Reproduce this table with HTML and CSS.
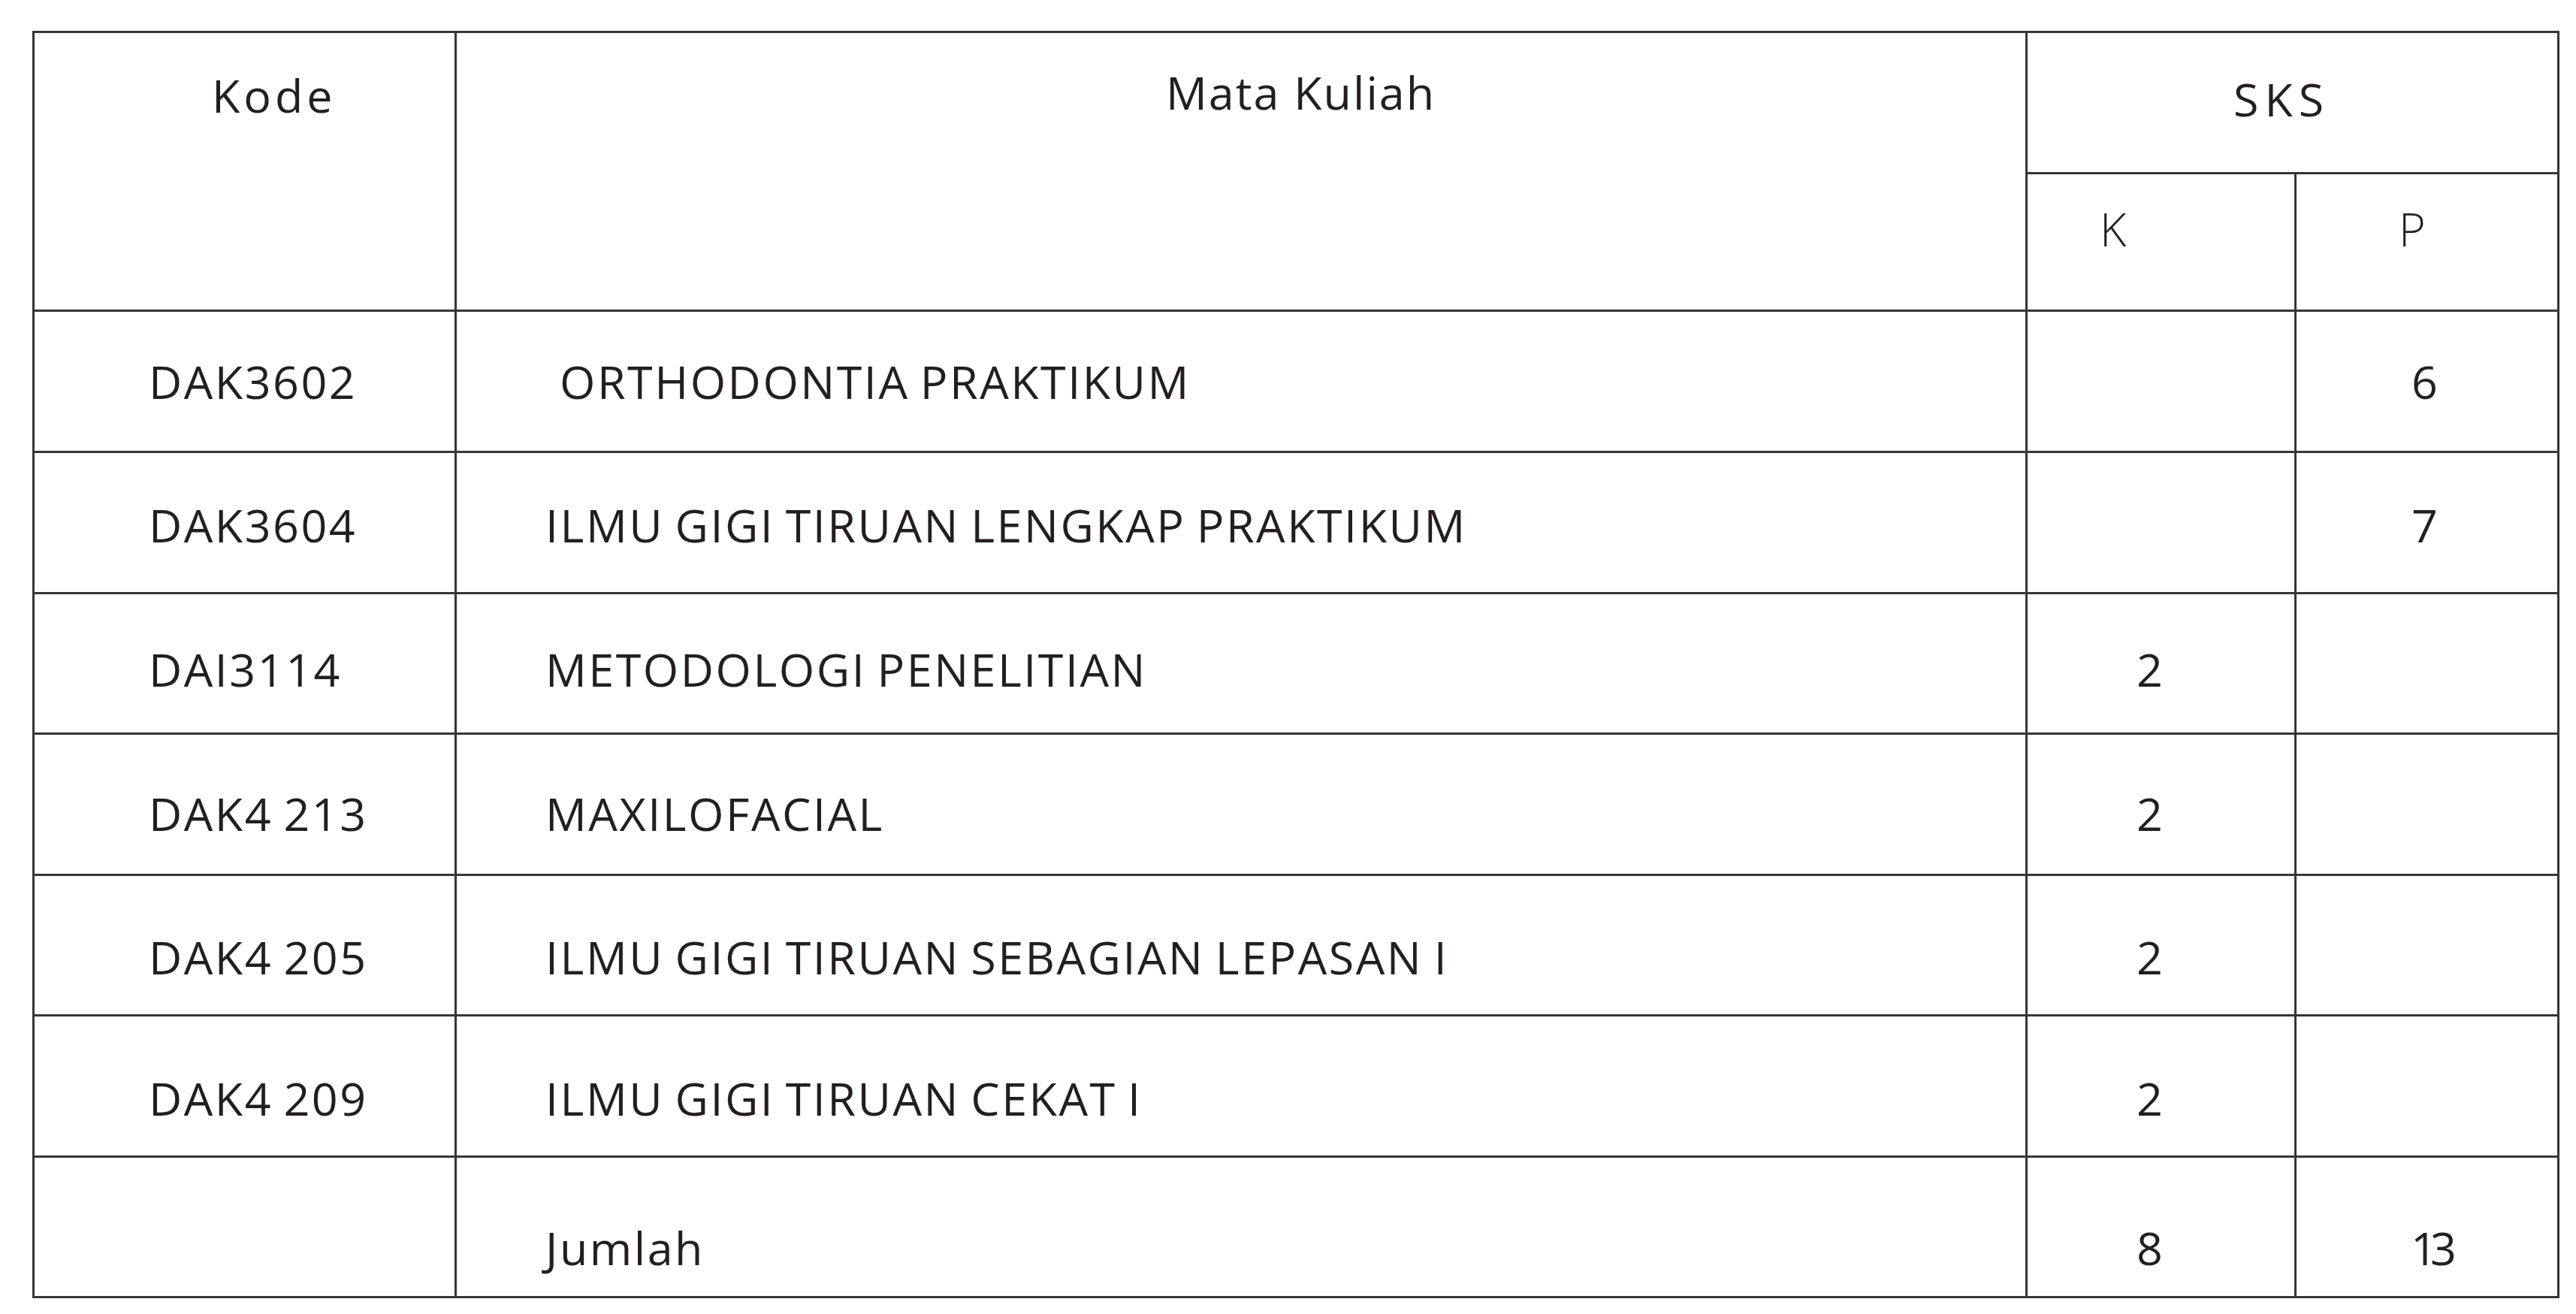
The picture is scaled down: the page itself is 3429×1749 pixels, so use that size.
FILE: index.html
```html
<!DOCTYPE html>
<html lang="id">
<head>
<meta charset="utf-8">
<title>Mata Kuliah</title>
<link rel="stylesheet" href="styles.css">
</head>
<body>
<div class="sheet">
  <div class="cell head h-kode">Kode</div>
  <div class="cell head h-mk">Mata Kuliah</div>
  <div class="cell head h-sks">SKS</div>
  <div class="cell sub h-k">K</div>
  <div class="cell sub h-p">P</div>

  <div class="cell r1 code">DAK3602</div>
  <div class="cell r1 name name-lead">ORTHODONTIA PRAKTIKUM</div>
  <div class="cell r1 k"></div>
  <div class="cell r1 p">6</div>

  <div class="cell r2 code">DAK3604</div>
  <div class="cell r2 name">ILMU GIGI TIRUAN LENGKAP PRAKTIKUM</div>
  <div class="cell r2 k"></div>
  <div class="cell r2 p">7</div>

  <div class="cell r3 code">DAI3114</div>
  <div class="cell r3 name">METODOLOGI PENELITIAN</div>
  <div class="cell r3 k">2</div>
  <div class="cell r3 p"></div>

  <div class="cell r4 code">DAK4 213</div>
  <div class="cell r4 name">MAXILOFACIAL</div>
  <div class="cell r4 k">2</div>
  <div class="cell r4 p"></div>

  <div class="cell r5 code">DAK4 205</div>
  <div class="cell r5 name">ILMU GIGI TIRUAN SEBAGIAN LEPASAN I</div>
  <div class="cell r5 k">2</div>
  <div class="cell r5 p"></div>

  <div class="cell r6 code">DAK4 209</div>
  <div class="cell r6 name">ILMU GIGI TIRUAN CEKAT I</div>
  <div class="cell r6 k">2</div>
  <div class="cell r6 p"></div>

  <div class="cell r7 code"></div>
  <div class="cell r7 name">Jumlah</div>
  <div class="cell r7 k">8</div>
  <div class="cell r7 p p-wide">13</div>
</div>
</body>
</html>
```

FILE: styles.css
```css
html, body {
  margin: 0;
  padding: 0;
  background: #ffffff;
}

body {
  font-family: "Open Sans", "Noto Sans", sans-serif;
  color: #231f20;
}

.sheet {
  display: grid;
  grid-template-columns: 559px 2088px 355px 347px;
  grid-template-rows: 185px 180px 185px 185px 184px 185px 184px 185px 184px;
  gap: 3px;
  padding: 3px;
  background: #363636;
  width: max-content;
  margin: 41px 0 0 43px;
}

.cell {
  background: #ffffff;
  font-size: 61px;
  line-height: 61px;
  font-weight: 400;
  letter-spacing: 2.5px;
  word-spacing: -4px;
  white-space: pre;
}

.head {
  font-weight: 500;
  letter-spacing: 2px;
  word-spacing: 0;
}

.h-kode {
  grid-row: 1 / 3;
  grid-column: 1;
  padding: 52px 0 0 236px;
  letter-spacing: 5px;
}

.h-mk {
  grid-row: 1 / 3;
  grid-column: 2;
  padding: 48px 0 0 944px;
}

.h-sks {
  grid-row: 1;
  grid-column: 3 / 5;
  padding: 57px 0 0 274px;
  letter-spacing: 8px;
}

.sub {
  font-weight: 300;
  padding-top: 42px;
}

.h-k {
  grid-row: 2;
  grid-column: 3;
  padding-left: 96px;
}

.h-p {
  grid-row: 2;
  grid-column: 4;
  padding-left: 136px;
}

.r1 { padding-top: 62px; }
.r2 { padding-top: 65px; }
.r3 { padding-top: 69px; }
.r4 { padding-top: 74px; }
.r5 { padding-top: 77px; }
.r6 { padding-top: 78px; }
.r7 { padding-top: 89px; }

.code {
  padding-left: 152px;
}

.name {
  padding-left: 118px;
}

.name-lead {
  padding-left: 137px;
}

.k {
  padding-left: 145px;
}

.p {
  padding-left: 153px;
}

.p-wide {
  padding-left: 152px;
  letter-spacing: -9px;
}
```
